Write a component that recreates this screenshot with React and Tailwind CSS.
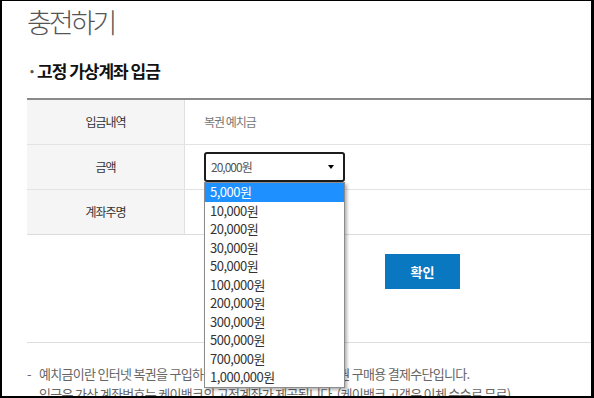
import React from "react";

const amounts = [
  "5,000원",
  "10,000원",
  "20,000원",
  "30,000원",
  "50,000원",
  "100,000원",
  "200,000원",
  "300,000원",
  "500,000원",
  "700,000원",
  "1,000,000원",
];

const font = { fontFamily: '"Noto Sans CJK KR", "Noto Sans", sans-serif' };

const Row = ({ label, children, last }) => (
  <div className={`flex h-[45px] ${last ? "border-b border-[#dcdcdc]" : "border-b border-[#e3e3e3]"}`}>
    <div className="w-[158px] shrink-0 bg-[#f5f5f5] border-r border-[#e0e0e0] flex items-center justify-center text-[12px] tracking-[-1px] text-[#333]">
      {label}
    </div>
    <div className="flex-1 flex items-center pl-[19px]">{children}</div>
  </div>
);

const AmountSelect = () => (
  <div className="relative">
    <div className="w-[141px] h-[30px] border-2 border-[#1c1c1c] rounded-[3px] flex items-center justify-between pl-[5px] pr-[9px] text-[12px] tracking-[-1px] text-[#555]">
      <span>20,000원</span>
      <span className="w-0 h-0 border-l-[3px] border-r-[3px] border-t-[4px] border-l-transparent border-r-transparent border-t-black" />
    </div>
    <ul className="absolute left-0 top-full z-10 w-[141px] bg-white border border-[#8c8c8c] shadow-[2px_2px_3px_rgba(0,0,0,0.3)]">
      {amounts.map((a, i) => (
        <li
          key={a}
          className={`h-[18.5px] leading-[18.5px] pl-[5px] text-[13px] tracking-[-0.5px] ${
            i === 0 ? "bg-[#1e90ff] text-white" : "text-[#333]"
          }`}
        >
          {a}
        </li>
      ))}
    </ul>
  </div>
);

export default function App() {
  return (
    <div
      className="w-[594px] h-[398px] overflow-hidden bg-white border-l-2 border-t border-r-[3px] border-b-2 border-black"
      style={font}
    >
      <div className="w-[800px] pl-[25px]">
        <h1 className="pt-[3px] text-[27px] leading-[35px] tracking-[-3px] font-light text-[#555]">
          충전하기
        </h1>
        <h2 className="mt-[21px] flex items-center text-[17px] leading-[22px] font-bold tracking-[-1px] text-[#111]">
          <span className="w-[10px] text-[#555]">·</span>
          고정 가상계좌 입금
        </h2>
        <div className="mt-[16px] border-t-2 border-[#8a8a8a]">
          <Row label="입금내역">
            <span className="text-[12px] tracking-[-1px] text-[#777]">복권 예치금</span>
          </Row>
          <Row label="금액">
            <AmountSelect />
          </Row>
          <Row label="계좌주명" last />
        </div>
        <button className="ml-[358px] mt-[19px] w-[75px] h-[35px] bg-[#0a77c1] text-white text-[13px] font-bold">
          확인
        </button>
        <div className="mt-[53px] border-t border-[#dedede] pt-[21px] text-[13px] leading-[20px] tracking-[-0.7px] text-[#666]">
          <p className="flex">
            <span className="w-[12px]">-</span>
            예치금이란 인터넷 복권을 구입하실 수 있도록 충전해 두는 복권 구매용 결제수단입니다.
          </p>
          <p className="flex">
            <span className="w-[12px]"></span>
            입금은 가상 계좌번호는 케이뱅크의 고정계좌가 제공됩니다. (케이뱅크 고객은 이체 수수료 무료)
          </p>
        </div>
      </div>
    </div>
  );
}
